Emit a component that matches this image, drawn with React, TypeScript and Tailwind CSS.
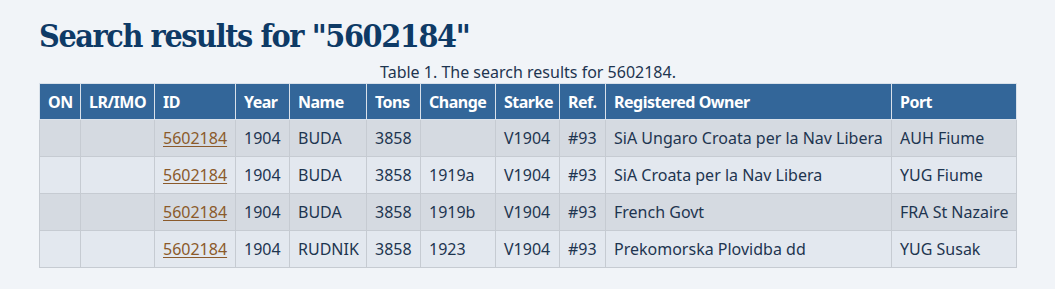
import React from 'react';

const columns = [
  { label: 'ON', w: 'w-[41px]' },
  { label: 'LR/IMO', w: 'w-[74px]' },
  { label: 'ID', w: 'w-[81px]' },
  { label: 'Year', w: 'w-[54px]' },
  { label: 'Name', w: 'w-[77px]' },
  { label: 'Tons', w: 'w-[54px]' },
  { label: 'Change', w: 'w-[75px]' },
  { label: 'Starke', w: 'w-[64px]' },
  { label: 'Ref.', w: 'w-[46px]' },
  { label: 'Registered Owner', w: 'w-[286px]' },
  { label: 'Port', w: 'w-[125px]' },
];

const rows = [
  { name: 'BUDA', change: '', owner: 'SiA Ungaro Croata per la Nav Libera', port: 'AUH Fiume' },
  { name: 'BUDA', change: '1919a', owner: 'SiA Croata per la Nav Libera', port: 'YUG Fiume' },
  { name: 'BUDA', change: '1919b', owner: 'French Govt', port: 'FRA St Nazaire' },
  { name: 'RUDNIK', change: '1923', owner: 'Prekomorska Plovidba dd', port: 'YUG Susak' },
];

export default function App() {
  return (
    <div className="min-h-[289px] bg-[#f1f4f8] px-[39px] pt-[14px] font-['Noto_Sans',sans-serif] text-[#1e3550]">
      <h1 className="font-['DejaVu_Serif_Condensed','DejaVu_Serif',serif] text-[32px] font-bold leading-[44px] text-[#0e3a66] tracking-[-1.4px]">
        Search results for "5602184"
      </h1>
      <table className="mt-[3px] w-[977px] table-fixed border-collapse text-[16px]">
        <caption className="text-[16px] leading-[22px] text-[#1e3550]">
          Table 1. The search results for 5602184.
        </caption>
        <thead>
          <tr className="h-[36px] bg-[#336699] text-white">
            {columns.map((c) => (
              <th
                key={c.label}
                className={`${c.w} border border-[#d9e1ea] px-2 text-left font-bold tracking-[-0.5px]`}
              >
                {c.label}
              </th>
            ))}
          </tr>
        </thead>
        <tbody>
          {rows.map((r, i) => (
            <tr key={i} className={`h-[37px] ${i % 2 === 0 ? 'bg-[#d5dae1]' : 'bg-[#e3e8ef]'}`}>
              <td className="border border-[#c6cbd2] px-2" />
              <td className="border border-[#c6cbd2] px-2" />
              <td className="border border-[#c6cbd2] px-2">
                <a href="#" className="text-[#8b5a2b] underline decoration-1 underline-offset-2">
                  5602184
                </a>
              </td>
              <td className="border border-[#c6cbd2] px-2">1904</td>
              <td className="border border-[#c6cbd2] px-2">{r.name}</td>
              <td className="border border-[#c6cbd2] px-2">3858</td>
              <td className="border border-[#c6cbd2] px-2">{r.change}</td>
              <td className="border border-[#c6cbd2] px-2">V1904</td>
              <td className="border border-[#c6cbd2] px-2">#93</td>
              <td className="whitespace-nowrap border border-[#c6cbd2] px-2">{r.owner}</td>
              <td className="whitespace-nowrap border border-[#c6cbd2] px-2">{r.port}</td>
            </tr>
          ))}
        </tbody>
      </table>
    </div>
  );
}
